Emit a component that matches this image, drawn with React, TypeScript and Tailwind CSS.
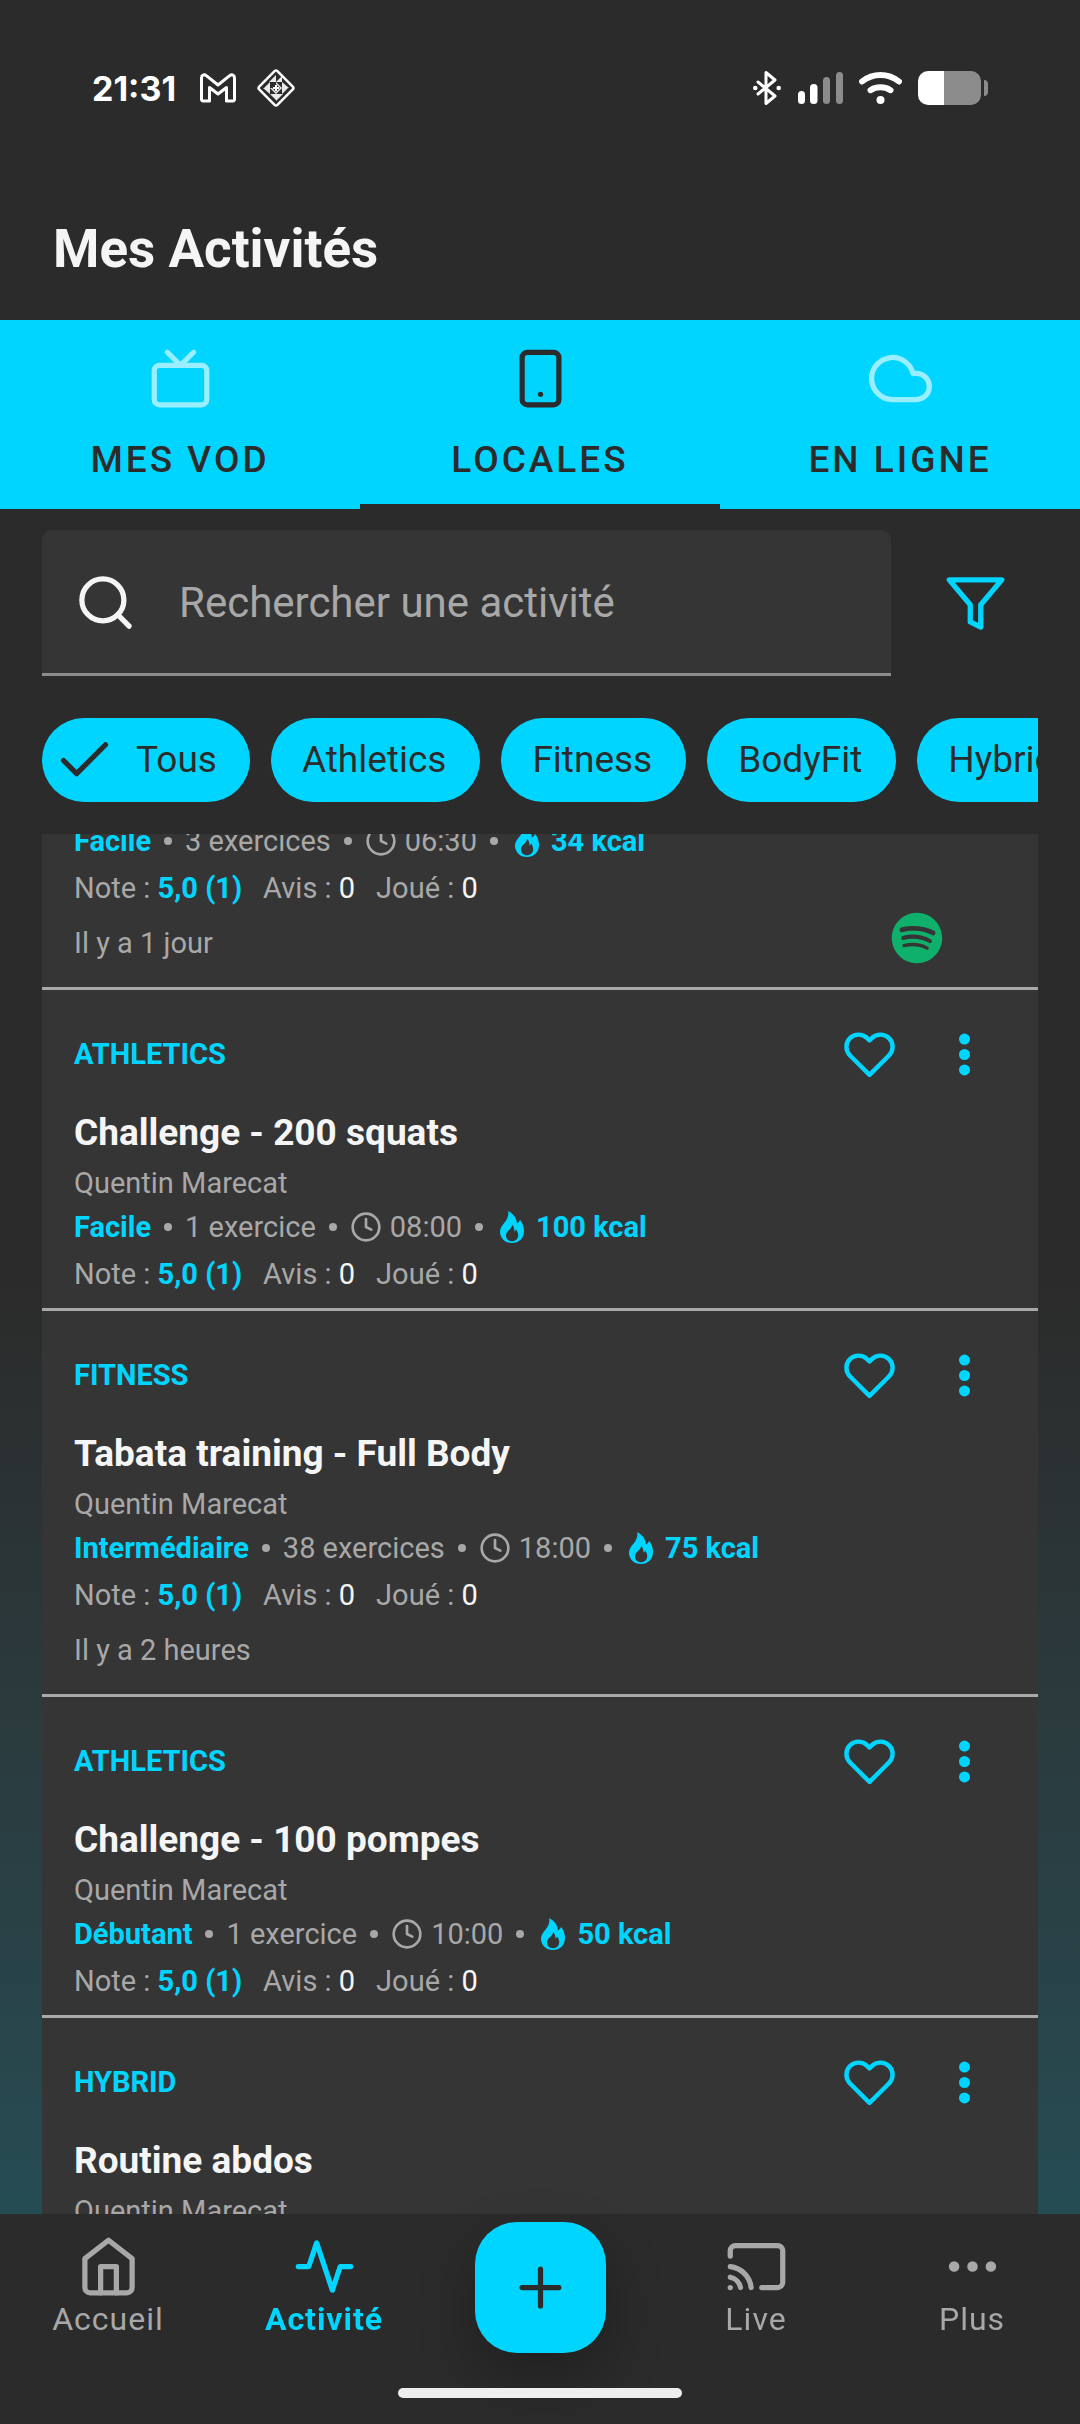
import React, { useLayoutEffect, useRef, useState } from 'react';
import type { IconType } from 'react-icons';
import {
  FiActivity,
  FiCast,
  FiCheck,
  FiClock,
  FiCloud,
  FiFilter,
  FiHeart,
  FiHome,
  FiMoreHorizontal,
  FiMoreVertical,
  FiPlus,
  FiSearch,
  FiSmartphone,
  FiTv,
} from 'react-icons/fi';
import { FaSpotify } from 'react-icons/fa';

type Activity = {
  id: number;
  category: string;
  title: string;
  author: string;
  level: string;
  exercises: string;
  duration: string;
  kcal: number;
  date?: string;
  spotify?: boolean;
};

const tabs: { label: string; Icon: IconType }[] = [
  { label: 'Mes VOD', Icon: FiTv },
  { label: 'Locales', Icon: FiSmartphone },
  { label: 'En ligne', Icon: FiCloud },
];

const filters = ['Tous', 'Athletics', 'Fitness', 'BodyFit', 'Hybrid'];

const activities: Activity[] = [
  { id: 1, category: 'Fitness', title: 'Routine cardio', author: 'Quentin Marecat', level: 'Facile', exercises: '3 exercices', duration: '06:30', kcal: 34, date: 'Il y a 1 jour', spotify: true },
  { id: 2, category: 'Athletics', title: 'Challenge - 200 squats', author: 'Quentin Marecat', level: 'Facile', exercises: '1 exercice', duration: '08:00', kcal: 100 },
  { id: 3, category: 'Fitness', title: 'Tabata training - Full Body', author: 'Quentin Marecat', level: 'Intermédiaire', exercises: '38 exercices', duration: '18:00', kcal: 75, date: 'Il y a 2 heures' },
  { id: 4, category: 'Athletics', title: 'Challenge - 100 pompes', author: 'Quentin Marecat', level: 'Débutant', exercises: '1 exercice', duration: '10:00', kcal: 50 },
  { id: 5, category: 'Hybrid', title: 'Routine abdos', author: 'Quentin Marecat', level: 'Facile', exercises: '5 exercices', duration: '12:00', kcal: 60 },
];

const FlameIcon = () => (
  <svg width="24" height="32" viewBox="0 0 24 32" fill="currentColor" aria-hidden="true">
    <path
      fillRule="evenodd"
      d="M8.3 0C14 3.4 16.6 7.2 17 12.4c1.6-.9 2.6-2.100 3-3.700 2.600 3 4 7 4 11.300C24 27.200 19 32 12 32S0 27.200 0 20.500C0 13.200 9.600 10.400 8.300 0zM12 13.700c.5 4.300-6 5.800-6 10.800 0 3.400 2.600 5.800 6 5.800s6.200-2.300 6.200-6c0-2.300-.8-4.200-2.200-5.800-.3 1-.8 1.700-1.600 2.200.2-3-.6-5.400-2.400-7z"
    />
  </svg>
);

const StatusBar = () => (
  <div className="flex h-44 shrink-0 items-center justify-between px-[92px] text-white">
    <div className="flex items-center">
      <span className="w-[108px] font-[Inter,sans-serif] text-[34px] font-bold">21:31</span>
      {/* mail */}
      <svg width="36" height="30" viewBox="0 0 36 30" fill="none" stroke="currentColor" strokeWidth="3" strokeLinejoin="round">
        <path d="M1.500 5c0-3 2.500-4 4.800-2.300L18 12 29.700 2.700C32 1 34.500 2 34.500 5v21.500a1.500 1.500 0 0 1-1.500 1.500h-6.500V14.500L18 21l-8.500-6.500V28H3a1.500 1.500 0 0 1-1.500-1.500z" />
      </svg>
      {/* diamond */}
      <svg className="ml-[21px]" width="38" height="38" viewBox="0 0 38 38">
        <path d="M17.600 2.200a2 2 0 0 1 2.800 0l15.400 15.400a2 2 0 0 1 0 2.800L20.400 35.800a2 2 0 0 1-2.800 0L2.200 20.400a2 2 0 0 1 0-2.800z" fill="none" stroke="currentColor" strokeWidth="2.500" />
        <path d="M19 6v7h-7zM32 19h-7v-6zM19 32v-7h7zM6 19h7v6zM13 13v6H7zM25 13h-6l6-6zM25 25v-6h6zM13 25h6v6zM19 13l6 6h-6zM25 19l-6 6v-6zM19 25l-6-6h6z" fill="currentColor" opacity=".9" />
        <path d="M19 15l4 4-4 4-4-4z" fill="#2b2b2b" />
        <path d="M16 19h6M19 16v6" stroke="currentColor" strokeWidth="2" />
      </svg>
    </div>
    <div className="flex items-center">
      {/* bluetooth */}
      <svg width="28" height="34" viewBox="0 0 28 34" fill="none" stroke="currentColor" strokeWidth="3" strokeLinecap="round" strokeLinejoin="round">
        <path d="M5 11l17 14-9 7.500V1.500L22 9 5 23" />
        <circle cx="2.300" cy="17" r="2.300" fill="currentColor" stroke="none" />
        <circle cx="25.700" cy="17" r="2.300" fill="currentColor" stroke="none" />
      </svg>
      {/* signal */}
      <svg className="ml-[17px]" width="45" height="34" viewBox="0 0 45 34" fill="currentColor">
        <rect x="0" y="20" width="7" height="13" rx="3.500" />
        <rect x="12" y="13" width="7.500" height="20" rx="3.500" />
        <rect x="25" y="6" width="7" height="27" rx="3.500" fill="#8c8c8c" />
        <rect x="38" y="1" width="7" height="32" rx="3.500" fill="#8c8c8c" />
      </svg>
      {/* wifi */}
      <svg className="ml-4" width="43" height="34" viewBox="0 0 43 34" fill="none" stroke="currentColor" strokeWidth="6" strokeLinecap="round">
        <path d="M3 10.500c11-8.700 26-8.700 37 0M11.500 19.200c6-3.800 14-3.800 20 0" />
        <circle cx="21.500" cy="29" r="4" fill="currentColor" stroke="none" />
      </svg>
      {/* battery */}
      <svg className="ml-4" width="70" height="34" viewBox="0 0 70 34">
        <path d="M10 0h16v34H10A10 10 0 0 1 0 24V10A10 10 0 0 1 10 0z" fill="#fff" />
        <path d="M26 0h27a10 10 0 0 1 10 10v14a10 10 0 0 1-10 10H26zM66 9a4 4 0 0 1 4 4v8a4 4 0 0 1-4 4z" fill="#8c8c8c" />
      </svg>
    </div>
  </div>
);

const Dot = () => <span className="mx-[13px] size-2 rounded-full bg-[#a8a8a8]" />;

const ActivityCard: React.FC<{ activity: Activity }> = ({ activity: a }) => {
  const [liked, setLiked] = useState(false);
  return (
    <li className="border-b-3 border-[#a8a8a8] pl-8 pr-[47px] text-[29px] leading-[34px] text-[#a8a8a8]">
      <div className="flex h-32 items-center">
        <span className="flex-1 font-bold uppercase text-[#00d5ff]">{a.category}</span>
        <button
          onClick={() => setLiked((l) => !l)}
          aria-label="Ajouter aux favoris"
          aria-pressed={liked}
          className="mr-[42px] text-[#00d5ff]"
        >
          <FiHeart size={53} fill={liked ? 'currentColor' : 'none'} />
        </button>
        <button aria-label="Options" className="text-[#00d5ff]">
          <FiMoreVertical size={53} strokeWidth={3} fill="currentColor" />
        </button>
      </div>
      <h2 className="-mt-1.5 text-[37px] font-bold leading-[42px] text-[#f5f5f5]">{a.title}</h2>
      <p className="mt-3">{a.author}</p>
      <div className="mt-2.5 flex items-center">
        <span className="font-bold text-[#00d5ff]">{a.level}</span>
        <Dot />
        <span>{a.exercises}</span>
        <Dot />
        <FiClock size={32} />
        <span className="ml-2">{a.duration}</span>
        <Dot />
        <span className="ml-1 flex items-center gap-3 font-bold text-[#00d5ff]">
          <FlameIcon />
          {a.kcal} kcal
        </span>
      </div>
      <div className="mt-[13px] flex gap-[21px]">
        <span>
          Note : <b className="text-[#00d5ff]">5,0 (1)</b>
        </span>
        <span>
          Avis : <span className="text-[#f5f5f5]">0</span>
        </span>
        <span>
          Joué : <span className="text-[#f5f5f5]">0</span>
        </span>
      </div>
      <div className="flex items-center justify-between pb-[17px]">
        {a.date && <p className="pb-2.5 pt-[21px]">{a.date}</p>}
        {a.spotify && <FaSpotify size={52} className="mr-12 text-[#0fb06b]" />}
      </div>
    </li>
  );
};

const NavItem: React.FC<{ label: string; Icon: IconType; active?: boolean }> = ({ label, Icon, active }) => (
  <a
    href="#"
    aria-current={active ? 'page' : undefined}
    className={`flex flex-col items-center pt-[21px] text-[32px] leading-[38px] tracking-[1px] ${
      active ? 'font-bold text-[#00d5ff]' : 'text-[#a8a8a8]'
    }`}
  >
    <Icon size={63} />
    <span className="mt-0.5">{label}</span>
  </a>
);

export default function App() {
  const [tab, setTab] = useState(1);
  const [filter, setFilter] = useState('Tous');
  const [query, setQuery] = useState('');
  const listRef = useRef<HTMLUListElement>(null);

  // start a little way down the list
  useLayoutEffect(() => {
    if (listRef.current) listRef.current.scrollTop = 230;
  }, []);

  return (
    <div className="flex h-screen flex-col bg-linear-to-b from-[#2b2b2b] from-53% to-[#21545d] font-[Roboto,sans-serif]">
      <StatusBar />

      <header className="flex h-36 shrink-0 items-center px-[53px] pt-0.5">
        <h1 className="text-[53px] font-bold leading-[62px] text-[#f5f5f5]">Mes Activités</h1>
      </header>

      <div role="tablist" className="grid shrink-0 grid-cols-3 bg-[#00d5ff] text-[#2b2b2b]">
        {tabs.map(({ label, Icon }, i) => (
          <button
            key={label}
            role="tab"
            aria-selected={tab === i}
            onClick={() => setTab(i)}
            className={`flex h-[189px] flex-col items-center border-b-5 pt-[27px] text-[37px] font-medium uppercase leading-[44px] tracking-[3px] ${
              tab === i ? 'border-[#2b2b2b]' : 'border-transparent'
            }`}
          >
            <Icon size={63} className={tab === i ? '' : 'text-[#99eeff]'} />
            <span className="mt-7">{label}</span>
          </button>
        ))}
      </div>

      <div className="mx-[42px] mt-[21px] flex shrink-0 items-center">
        <label className="flex h-[146px] flex-1 items-center rounded-t-[10px] border-b-3 border-[#8c8c8c] bg-[#353535] pl-8 pt-0.5">
          <FiSearch size={63} className="text-[#f5f5f5]" />
          <input
            type="text"
            value={query}
            onChange={(e) => setQuery(e.target.value)}
            placeholder="Rechercher une activité"
            aria-label="Rechercher une activité"
            className="ml-[42px] min-w-0 flex-1 bg-transparent text-[42px] text-[#f5f5f5] outline-none placeholder:text-[#a8a8a8]"
          />
        </label>
        <button aria-label="Filtrer" className="ml-[53px] mr-[31px] text-[#00d5ff]">
          <FiFilter size={63} />
        </button>
      </div>

      <div className="mx-[42px] mt-[42px] flex shrink-0 gap-[21px] overflow-x-auto [scrollbar-width:none]">
        {filters.map((f) => (
          <button
            key={f}
            onClick={() => setFilter(f)}
            aria-pressed={filter === f}
            className={`flex h-[84px] shrink-0 items-center rounded-full bg-[#00d5ff] text-[37px] text-[#2b2b2b] ${
              filter === f ? 'gap-5 pl-[11px] pr-[33px]' : 'pl-[31px] pr-[34px]'
            }`}
          >
            {filter === f && <FiCheck size={63} />}
            {f}
          </button>
        ))}
      </div>

      <ul ref={listRef} className="mx-[42px] mt-8 min-h-0 flex-1 overflow-y-auto bg-[#353535] [scrollbar-width:none]">
        {activities.map((a) => (
          <ActivityCard key={a.id} activity={a} />
        ))}
      </ul>

      <footer className="shrink-0 bg-[#2b2b2b]">
        <nav className="grid h-[174px] grid-cols-5">
          <NavItem label="Accueil" Icon={FiHome} />
          <NavItem label="Activité" Icon={FiActivity} active />
          <div className="flex justify-center pt-2">
            <button
              aria-label="Ajouter"
              className="flex size-[131px] items-center justify-center rounded-[42px] bg-[#00d5ff] text-[#2b2b2b] shadow-[0_24px_56px_rgba(0,0,0,0.25)]"
            >
              <FiPlus size={63} />
            </button>
          </div>
          <NavItem label="Live" Icon={FiCast} />
          <NavItem label="Plus" Icon={FiMoreHorizontal} />
        </nav>
        <div className="relative mx-auto mb-[26px] h-2.5 w-[284px] rounded-full bg-[#eeeeee]" />
      </footer>
    </div>
  );
}
